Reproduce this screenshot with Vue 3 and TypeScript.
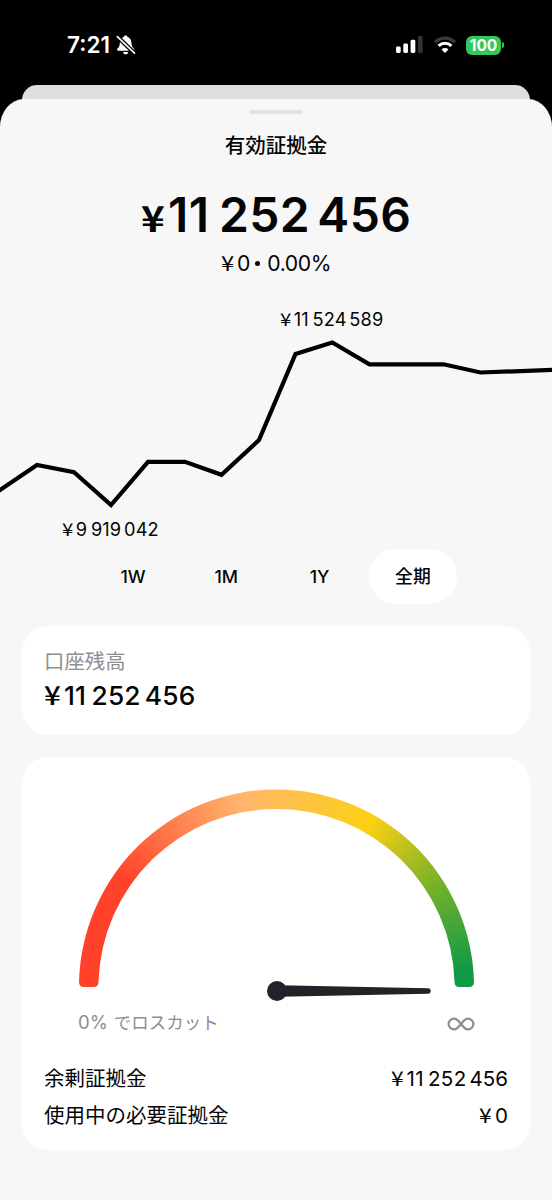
<script setup lang="ts">
interface Row {
  label: string
  value: number
}

const equity = 11252456
const balance = 11252456
const high = 11524589
const low = 9919042
const ranges: string[] = ['1W', '1M', '1Y', '全期']
const selected = '全期'
const rows: Row[] = [
  { label: '余剰証拠金', value: 11252456 },
  { label: '使用中の必要証拠金', value: 0 },
]

/** Splits an amount into its thousands groups. */
function groups(amount: number): string[] {
  return amount.toLocaleString('en-US').split(',')
}

const points: [number, number][] = [
  [-2, 191.3], [0, 190], [37, 165], [74, 172.3], [111, 205], [148, 161.8], [185, 161.8],
  [221.5, 174.8], [259, 140], [295.5, 54], [332.3, 42.5], [369.5, 64.3], [443.5, 64.3],
  [480.5, 72.5], [554, 69.9],
]
const line = points.map((p) => p.join(',')).join(' ')
</script>

<template>
  <div class="screen">
    <header class="status">
      <div class="clock">
        <span class="time">7:21</span>
        <svg class="bell" width="20" height="20" viewBox="0 0 20 20">
          <path d="M9.600 .6c.9 0 1.600.5 1.900 1.300 2.400.8 3.700 2.700 3.900 5.400.2 3.600.7 4.800 2.500 6.500.9.9.4 2-.8 2H2.200c-1.200 0-1.700-1.100-.8-2 1.800-1.700 2.300-2.900 2.500-6.500.2-2.700 1.500-4.600 3.900-5.400C8 1.100 8.700.6 9.600.6z" fill="#fff" />
          <path d="M7 17h5.200c-.2 1.500-1.200 2.300-2.600 2.300S7.200 18.500 7 17z" fill="#fff" />
          <path d="M1 1.200 19 18.800" stroke="#000" stroke-width="4.200" />
          <path d="M1.300 1.600 18.500 18.200" stroke="#fff" stroke-width="1.600" stroke-linecap="round" />
        </svg>
      </div>
      <div class="indicators">
        <svg class="signal" width="27" height="18" viewBox="0 0 27 18">
          <rect x="0" y="10.500" width="4.700" height="6.500" rx="1.400" fill="#fff" />
          <rect x="7.300" y="7.500" width="4.700" height="9.500" rx="1.400" fill="#fff" />
          <rect x="14.600" y="3.800" width="4.700" height="13.200" rx="1.400" fill="#fff" />
          <rect x="22" y="0" width="4.700" height="17" rx="1.400" fill="#333" />
        </svg>
        <svg class="wifi" width="24" height="18" viewBox="0 0 24 18">
          <path d="M2 6.300C7.500.7 16.500.7 22 6.300" fill="none" stroke="#3a3a3a" stroke-width="3.200" />
          <path d="M5.600 9.900c3.600-3.500 9.200-3.500 12.800 0" fill="none" stroke="#fff" stroke-width="3" />
          <path d="M12 17 8.500 13.400c2-1.800 5-1.800 7 0z" fill="#fff" />
        </svg>
        <div class="battery">
          <span class="charge">100</span>
          <span class="cap"></span>
        </div>
      </div>
    </header>

    <div class="behind"></div>
    <main class="sheet">
      <div class="handle"></div>
      <h1 class="title">有効証拠金</h1>
      <div class="money equity">
        <span class="yen">¥</span><span v-for="(g, i) in groups(equity)" :key="i" class="group">{{ g }}</span>
      </div>
      <div class="change"><span class="yen">¥</span><span>0</span><i class="dot"></i><span class="percent">0.00%</span></div>

      <section class="chart">
        <svg width="552" height="249" viewBox="0 0 552 249">
          <polyline :points="line" fill="none" stroke="#000" stroke-width="4.200" stroke-linejoin="miter" />
        </svg>
        <div class="money mark high">
          <span class="yen">¥</span><span v-for="(g, i) in groups(high)" :key="i" class="group">{{ g }}</span>
        </div>
        <div class="money mark low">
          <span class="yen">¥</span><span v-for="(g, i) in groups(low)" :key="i" class="group">{{ g }}</span>
        </div>
      </section>

      <nav class="ranges">
        <button v-for="r in ranges" :key="r" type="button" :class="['range', { on: r === selected }]">{{ r }}</button>
      </nav>

      <section class="card balance">
        <div class="label">口座残高</div>
        <div class="money amount">
          <span class="yen">¥</span><span v-for="(g, i) in groups(balance)" :key="i" class="group">{{ g }}</span>
        </div>
      </section>

      <section class="card margin">
        <div class="gauge">
          <div class="arc"></div>
          <svg class="needle" width="168" height="22" viewBox="0 0 168 22">
            <circle cx="11" cy="11" r="10" fill="#222328" />
            <path d="M14 5.300 162 8.300q2.700.1 2.700 2.700t-2.700 2.700L14 16.700z" fill="#222328" />
          </svg>
        </div>
        <div class="scale">
          <span class="zero"><span class="pct">0%</span>でロスカット</span>
          <svg class="infinity" width="28" height="14" viewBox="0 0 28 14">
            <path d="M14 7C11.500 3.600 9.800 1.600 7 1.600a5.400 5.400 0 0 0 0 10.800C9.800 12.400 11.500 10.400 14 7S18.200 1.600 21 1.600a5.400 5.400 0 0 1 0 10.800C18.200 12.400 16.500 10.400 14 7z" fill="none" stroke="#8e8e90" stroke-width="2.200" />
          </svg>
        </div>
        <div v-for="row in rows" :key="row.label" class="row">
          <span>{{ row.label }}</span>
          <span class="money">
            <span class="yen">¥</span><span v-for="(g, i) in groups(row.value)" :key="i" class="group">{{ g }}</span>
          </span>
        </div>
      </section>
    </main>
  </div>
</template>

<style>
body {
  margin: 0;
  background: #000;
}
</style>

<style scoped>
.screen {
  box-sizing: border-box;
  width: 552px;
  height: 1200px;
  overflow: hidden;
  background: #000;
  color: #050505;
  font-family: Inter, 'Noto Sans CJK JP', sans-serif;
  display: flex;
  flex-direction: column;
}
.status {
  height: 85px;
  flex: none;
  display: flex;
  justify-content: space-between;
  align-items: flex-start;
  box-sizing: border-box;
  padding: 35px 48px 0 67px;
}
.clock,
.indicators {
  display: flex;
  align-items: center;
  height: 20px;
}
.time {
  color: #fff;
  font-size: 22.500px;
  font-weight: 600;
  line-height: 20px;
  width: 49px;
  white-space: nowrap;
}
.signal {
  margin-right: 10px;
}
.wifi {
  margin-right: 9px;
}
.battery {
  display: flex;
  align-items: center;
  gap: 1px;
}
.charge {
  width: 35px;
  height: 19px;
  border-radius: 6px;
  background: #34c759;
  color: #fff;
  font-size: 15.500px;
  line-height: 19px;
  font-weight: 700;
  text-align: center;
}
.cap {
  width: 2px;
  height: 6px;
  border-radius: 0 3px 3px 0;
  background: #34c759;
}
.behind {
  flex: none;
  height: 43px;
  margin: 0 22px;
  border-radius: 15px 15px 0 0;
  background: #dfdfdf;
}
.sheet {
  flex: 1;
  margin-top: -29px;
  border-radius: 24px 24px 0 0 / 28px 28px 0 0;
  background: #f7f7f7;
  display: flex;
  flex-direction: column;
  position: relative;
}
.handle {
  width: 54px;
  height: 4px;
  margin: 11px auto 0;
  border-radius: 2px;
  background: #e2e2e4;
}
.title {
  margin: 16px 0 0;
  height: 30px;
  line-height: 31px;
  font-size: 20.500px;
  font-weight: 500;
  text-align: center;
}
.money {
  display: flex;
  align-items: baseline;
  white-space: nowrap;
}
.yen {
  width: 0.760em;
  line-height: 1;
  font-family: 'Noto Sans CJK JP', sans-serif;
  transform: scaleX(1.120);
  transform-origin: 0 50%;
}
.group {
  letter-spacing: 0.008em;
}
.group + .group {
  margin-left: 0.150em;
}
.yen + .group {
  margin-right: 0.050em;
}
.yen + .group:last-child {
  margin-right: 0;
}
.equity {
  justify-content: center;
  margin-top: 25px;
  height: 60px;
  line-height: 60px;
  font-size: 48px;
  font-weight: 600;
}
.equity .yen {
  font-size: 36px;
  font-weight: 700;
}
.change {
  display: flex;
  justify-content: center;
  align-items: baseline;
  margin-top: 3px;
  height: 30px;
  line-height: 30px;
  font-size: 21.200px;
}
.dot {
  align-self: center;
  width: 5px;
  height: 5px;
  border-radius: 50%;
  background: #050505;
  margin: 1px 7px 0 5px;
}
.percent {
  letter-spacing: -0.020em;
}
.chart {
  position: relative;
  height: 249px;
  margin-top: 22px;
}
.chart svg {
  display: block;
}
.mark {
  position: absolute;
  font-size: 18.200px;
  line-height: 24px;
}
.high {
  left: 280px;
  top: 7px;
}
.low {
  left: 62px;
  top: 217px;
}
.ranges {
  display: flex;
  gap: 5.300px;
  padding-left: 89px;
  height: 55px;
}
.range {
  width: 88px;
  height: 55px;
  padding: 0;
  border: 0;
  border-radius: 27.500px;
  background: transparent;
  color: #050505;
  font: 500 17.800px/55px Inter, 'Noto Sans CJK JP', sans-serif;
}
.range.on {
  background: #fff;
}
.card {
  margin: 22px 22px 0;
  box-sizing: border-box;
  border-radius: 26px;
  background: #fff;
}
.balance {
  height: 109px;
  padding: 21px 22px 0;
}
.label {
  height: 30px;
  line-height: 30px;
  font-size: 20.400px;
  color: #8e8e90;
}
.amount {
  margin-top: 2px;
  height: 34px;
  line-height: 34px;
  font-size: 26.300px;
  font-weight: 500;
}
.margin {
  height: 393px;
  padding: 32px 22px 0;
}
.gauge {
  position: relative;
  width: 395px;
  height: 212px;
  margin-left: 35px;
}
.arc {
  width: 395px;
  height: 198px;
  background: conic-gradient(from 270deg at 197.500px 198px, #ff4229 0deg, #ff4229 35deg, #ff7f4f 58deg, #ffb56c 79deg, #ffc04d 94deg, #fcd012 120deg, #74b02a 148deg, #0f9a46 175deg, #0f9a46 180deg, #ff4229 181deg);
  clip-path: path('M5 198Q0 198 0 193A197.500 197.500 0 0 1 197.500 .5A197.500 197.500 0 0 1 395 193Q395 198 390 198H380.500Q375.500 198 375.500 193A178 178 0 0 0 197.500 20A178 178 0 0 0 19.500 193Q19.500 198 14.500 198Z');
}
.needle {
  position: absolute;
  left: 186.500px;
  top: 190.500px;
}
.scale {
  display: flex;
  justify-content: space-between;
  align-items: center;
  height: 30px;
  margin: 6px 33px 0 34px;
  font-size: 17.500px;
  line-height: 30px;
  color: #8e8e90;
}
.pct {
  font-size: 18.500px;
  margin-right: 6px;
}
.infinity {
  margin-top: 3px;
}
.row {
  display: flex;
  justify-content: space-between;
  height: 37px;
  line-height: 38px;
  font-size: 20.500px;
}
.row .group {
  letter-spacing: 0.018em;
}
.row .group:last-child {
  letter-spacing: 0;
}
.scale + .row {
  margin-top: 23px;
}
</style>
